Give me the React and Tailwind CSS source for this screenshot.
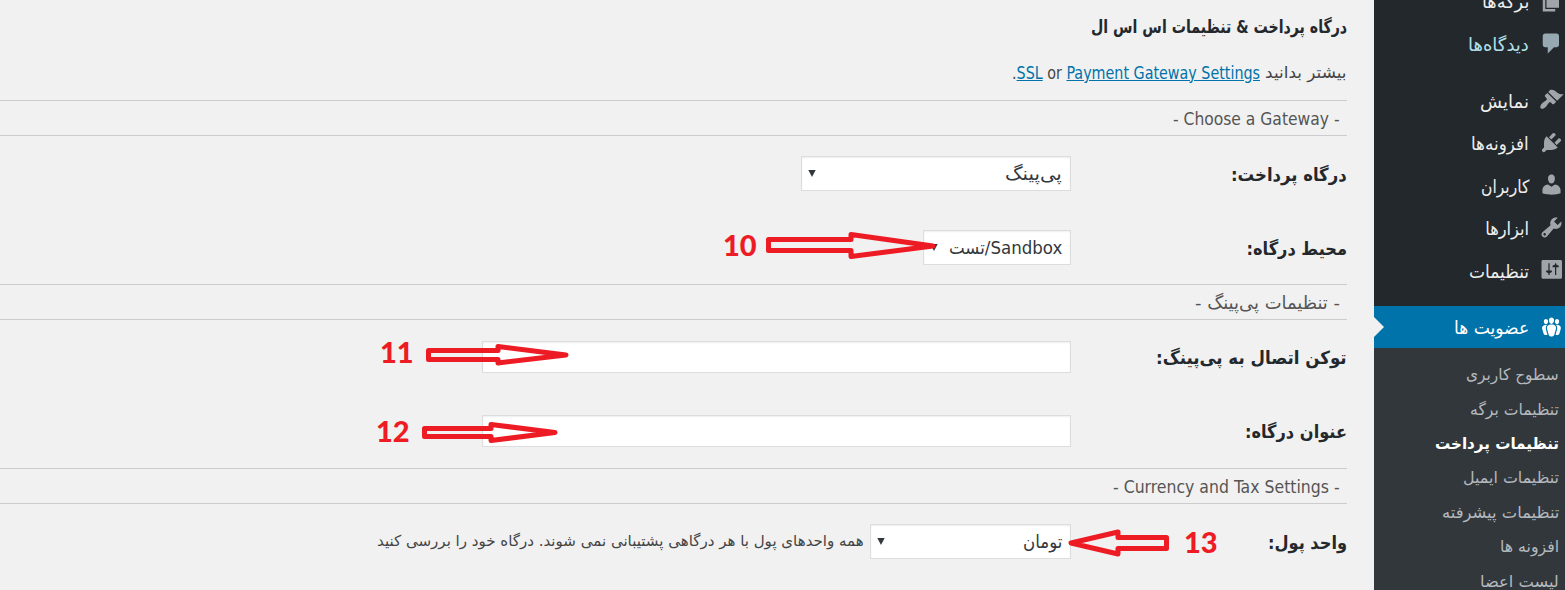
import { useLayoutEffect, useRef, useState } from "react";

const ICONS = {
  page: "M6 15V2h10v13H6zm-1 1h8v2H3V5h2v11z",
  comments: "M5 2h9c1.1 0 2 .9 2 2v7c0 1.1-.9 2-2 2h-2l-5 5v-5H5c-1.1 0-2-.9-2-2V4c0-1.1.9-2 2-2z",
  appearance:
    "M14.48 11.06L7.41 3.99l1.5-1.5c.5-.56 2.3-.47 3.51.32 1.21.8 1.43 1.28 2.91 2.1 1.18.64 2.45 1.26 4.45.85zm-.71.71L6.7 4.7 4.93 6.47c-.39.39-.39 1.02 0 1.41l1.06 1.06c.39.39.39 1.03 0 1.42-.6.6-1.43 1.11-2.21 1.69-.35.26-.7.53-1.01.84C1.43 14.23.4 16.08 1.4 17.07c.99 1 2.84-.03 4.18-1.36.31-.31.58-.66.85-1.02.57-.78 1.08-1.61 1.69-2.21.39-.39 1.02-.39 1.41 0l1.06 1.06c.39.39 1.02.39 1.41 0z",
  plugins:
    "M13.11 4.36L9.87 7.6 8 5.73l3.24-3.24c.35-.34 1.05-.2 1.56.32.52.51.66 1.21.31 1.55zm-8 1.77l.91-1.12 9.01 9.01-1.19.84c-.71.71-2.63 1.16-3.82 1.16H6.14L4.9 17.26c-.59.59-1.54.59-2.12 0-.59-.58-.59-1.53 0-2.12l1.24-1.24v-3.88c0-1.13.4-3.19 1.09-3.89zm7.26 3.97l3.24-3.24c.34-.35 1.04-.21 1.55.31.52.51.66 1.21.31 1.55l-3.24 3.25z",
  users:
    "M10 9.25c-2.27 0-2.73-3.44-2.73-3.44C7 4.02 7.82 2 9.97 2c2.16 0 2.98 2.02 2.71 3.81 0 0-.41 3.44-2.68 3.44zm0 2.57L12.72 10c2.39 0 4.52 2.33 4.52 4.53v2.49s-3.65 1.13-7.24 1.13c-3.65 0-7.24-1.13-7.24-1.13v-2.49c0-2.25 1.94-4.48 4.47-4.48z",
  tools:
    "M16.68 9.77c-1.34 1.34-3.3 1.67-4.95.99l-5.41 6.52c-.99.99-2.59.99-3.58 0s-.99-2.59 0-3.57l6.52-5.42c-.68-1.65-.35-3.61.99-4.95 1.28-1.28 3.12-1.62 4.72-1.06l-2.89 2.89 2.82 2.82 2.86-2.87c.53 1.58.18 3.39-1.08 4.65zM3.81 16.21c.4.39 1.04.39 1.43 0 .4-.4.4-1.04 0-1.43-.39-.4-1.03-.4-1.43 0-.39.39-.39 1.03 0 1.43z",
  settings:
    "M3.2 2.3h14c.7 0 1.2.5 1.2 1.200v12.700c0 .7-.5 1.200-1.200 1.200h-14c-.7 0-1.200-.5-1.200-1.200v-12.700c0-.7.5-1.200 1.200-1.200zM7.500 5v5.800H5.700v1.200l1.800.9v1.500h1v-1.500l1.800-.9v-1.200H8.500V5zM12.800 5v1l-2 .9v1.200h2v6.300h1V8.100h2V6.900l-2-.9V5z",
  groups:
    "M8.03 4.46c-.29 1.28.55 3.46 1.97 3.46 1.41 0 2.25-2.18 1.96-3.46-.22-.98-1.08-1.63-1.96-1.63-.89 0-1.74.65-1.97 1.63zm-4.13.9c-.25 1.08.47 2.93 1.67 2.93s1.92-1.85 1.67-2.93c-.19-.83-.92-1.39-1.67-1.39s-1.48.56-1.67 1.39zm8.86 0c-.25 1.08.47 2.93 1.66 2.93 1.2 0 1.92-1.85 1.67-2.93-.19-.83-.92-1.39-1.67-1.39-.74 0-1.47.56-1.66 1.39zm-.59 11.43l1.25-4.3C14.2 10 12.71 8.47 10 8.47c-2.72 0-4.21 1.53-3.44 4.02l1.26 4.3C8.05 17.51 9 18 10 18c.98 0 1.94-.49 2.17-1.21zm-6.1-7.63c-.49.67-.96 1.83-.42 3.59l1.12 3.79c-.34.2-.77.31-1.2.31-.85 0-1.65-.41-1.85-1.03l-1.07-3.65c-.65-2.11.61-3.4 2.92-3.4.27 0 .54.02.79.06-.1.1-.2.22-.29.33zm8.35-.39c2.31 0 3.58 1.29 2.92 3.4l-1.07 3.65c-.2.62-1 1.03-1.85 1.03-.43 0-.86-.11-1.2-.31l1.11-3.77c.55-1.78.08-2.94-.42-3.61-.08-.11-.18-.23-.28-.33.25-.04.51-.06.79-.06z",
};

// Sets a line of text to an exact width by condensing or widening it.
function Fit({ w, className = "", children }) {
  const ref = useRef(null);
  const [scale, setScale] = useState(1);
  useLayoutEffect(() => {
    setScale(w / ref.current.offsetWidth);
  }, [w]);
  return (
    <span className="block shrink-0" style={{ width: w }}>
      <span
        ref={ref}
        className={`block w-max origin-right whitespace-nowrap ${className}`}
        style={{ transform: `scaleX(${scale})` }}
      >
        {children}
      </span>
    </span>
  );
}

function MenuItem({
  icon,
  label,
  w,
  text = "text-[#eeeeee]",
  fill = "text-[#a0a5aa]",
  row = "h-[42.5px]",
  lift = "mb-[2px]",
}) {
  return (
    <li className={`flex shrink-0 items-center gap-[9.5px] pr-[1.5px] ${row}`}>
      <svg viewBox="0 0 20 20" className={`size-[25px] shrink-0 ${lift} ${fill}`} fill="currentColor" fillRule="evenodd">
        <path d={ICONS[icon]} />
      </svg>
      <Fit w={w} className={`pt-[2px] text-[18px] leading-[24px] ${text}`}>
        {label}
      </Fit>
    </li>
  );
}

const SUBMENU = [
  ["سطوح کاربری", 93],
  ["تنظیمات برگه", 89],
  ["تنظیمات پرداخت", 124, true],
  ["تنظیمات ایمیل", 96],
  ["تنظیمات پیشرفته", 117],
  ["افزونه ها", 59],
  ["لیست اعضا", 79],
];

function Sidebar() {
  return (
    <nav className="flex h-full w-[191px] shrink-0 flex-col overflow-hidden bg-[#23282d]">
      <ul className="-mt-5 flex shrink-0 flex-col">
        <MenuItem icon="page" label="برگه‌ها" w={47} lift="mb-0" />
        <MenuItem
          icon="comments"
          label="دیدگاه‌ها"
          w={61}
          text="text-[#b0e0ec]"
          fill="text-[#96a8b2]"
          lift="mb-0"
        />
        <li className="h-[14.5px]" />
        <MenuItem icon="appearance" label="نمایش" w={49} />
        <MenuItem icon="plugins" label="افزونه‌ها" w={58} />
        <MenuItem icon="users" label="کاربران" w={48} />
        <MenuItem icon="tools" label="ابزارها" w={44} />
        <MenuItem icon="settings" label="تنظیمات" w={60} />
        <li className="h-[14px]" />
        <MenuItem
          icon="groups"
          label="عضویت ها"
          w={75}
          text="text-white"
          fill="text-white"
          row="relative h-[42px] bg-[#0073aa] after:absolute after:left-0 after:top-[11px] after:border-y-[10px] after:border-l-[10px] after:border-y-transparent after:border-l-[#f1f1f1]"
        />
      </ul>
      <ul className="flex h-[260px] shrink-0 flex-col bg-[#32373c] pt-[10px] pr-[6px]">
        {SUBMENU.map(([label, w, current]) => (
          <li key={label} className="flex h-[34.4px] shrink-0 items-center">
            <Fit
              w={w}
              className={
                current
                  ? "text-[16px] leading-[22px] font-bold text-white"
                  : "text-[16px] leading-[22px] text-[#b4b9be]"
              }
            >
              {label}
            </Fit>
          </li>
        ))}
      </ul>
    </nav>
  );
}

function Band({ w, children }) {
  return (
    <div className="flex h-9 shrink-0 items-center border-y border-[#cccccc] pt-[2px] pr-[7px] text-[18px] leading-[24px] text-[#555555]">
      <Fit w={w}>{children}</Fit>
    </div>
  );
}

function Row({ label, w, height, children }) {
  return (
    <div className={`flex shrink-0 items-center ${height}`}>
      <div className="w-[276px] shrink-0 pt-[2px]">
        <Fit w={w} className="text-[18px] leading-[24px] font-bold text-[#23282d]">
          {label}
        </Fit>
      </div>
      {children}
    </div>
  );
}

function Select({ label, w, width }) {
  return (
    <div
      className={`flex h-[35px] shrink-0 items-center justify-between border border-[#dddddd] bg-white pr-[8px] pl-[6px] shadow-[inset_0_1px_2px_rgba(0,0,0,0.07)] ${width}`}
    >
      <Fit w={w} className="text-[18px] leading-[24px] text-[#32373c]">
        {label}
      </Fit>
      <svg viewBox="0 0 8 7" className="h-[7px] w-[8px] fill-[#32373c]">
        <path d="M0.3 0h7.4L4 7z" />
      </svg>
    </div>
  );
}

function TextBox() {
  return (
    <input
      className="h-[32px] w-[589px] border border-[#dddddd] bg-white px-2 shadow-[inset_0_1px_2px_rgba(0,0,0,0.07)] outline-none"
      type="text"
    />
  );
}

function Annotations() {
  const num = "absolute text-[29px] leading-[30px] font-black text-[#ed1c24] font-['Lato',sans-serif]";
  return (
    <div dir="ltr" className="pointer-events-none absolute inset-0">
      <svg
        viewBox="0 0 1565 590"
        className="absolute inset-0 h-[590px] w-[1565px]"
        fill="none"
        stroke="#ed1c24"
        strokeWidth="5"
        strokeLinejoin="round"
      >
        <path d="M768.5 239.5H851V234.500L933 246L851 256.500V250.500H768.500z" />
        <path d="M428.500 350.500H498V346.500L566 355L498 363V359.500H428.500z" />
        <path d="M424.500 428.500H491V424.500L555 432.500L491 440.500V436.500H424.500z" />
        <path d="M1166.500 537.500H1118V532L1071 543L1118 554V548.500H1166.500z" />
      </svg>
      <span className={`${num} left-[723px] top-[230px]`}>10</span>
      <span className={`${num} left-[380px] top-[337px]`}>11</span>
      <span className={`${num} left-[376px] top-[416px]`}>12</span>
      <span className={`${num} left-[1184px] top-[527px]`}>13</span>
    </div>
  );
}

export default function App() {
  return (
    <div
      dir="rtl"
      className="relative flex h-[590px] w-[1565px] overflow-hidden bg-[#f1f1f1] font-['DejaVu_Sans_Condensed','DejaVu_Sans',sans-serif]"
    >
      <Sidebar />
      <main className="flex min-w-0 flex-1 flex-col pr-[27px]">
        <h2 className="flex h-[53px] shrink-0 items-center text-[18px] leading-[24px] font-bold text-[#23282d]">
          <Fit w={256}>درگاه پرداخت &amp; تنظیمات اس اس ال</Fit>
        </h2>
        <div className="flex h-[47px] shrink-0 items-center gap-[5px] pb-2 text-[16px] leading-[22px] text-[#444444]">
          <Fit w={82}>بیشتر بدانید</Fit>
          <Fit w={248} className="text-[17px]">
            <a className="text-[#0073aa] underline">SSL</a> or{" "}
            <a className="text-[#0073aa] underline">Payment Gateway Settings</a>.
          </Fit>
        </div>
        <Band w={167}>- Choose a Gateway -</Band>
        <Row label="درگاه پرداخت:" w={116} height="h-[75px]">
          <Select label="پی‌پینگ" w={57} width="w-[270px]" />
        </Row>
        <Row label="محیط درگاه:" w={100} height="h-[73px]">
          <Select label="Sandbox/تست" w={113} width="w-[148px]" />
        </Row>
        <Band w={145}>- تنظیمات پی‌پینگ -</Band>
        <Row label="توکن اتصال به پی‌پینگ:" w={191} height="h-[74px]">
          <TextBox />
        </Row>
        <Row label="عنوان درگاه:" w={102} height="h-[74px]">
          <TextBox />
        </Row>
        <Band w={227}>- Currency and Tax Settings -</Band>
        <Row label="واحد پول:" w={79} height="h-[75px]">
          <Select label="تومان" w={39} width="w-[201px]" />
          <div className="mr-[6px] pb-[2px]">
            <Fit w={487} className="text-[15px] leading-[22px] text-[#444444]">
              همه واحدهای پول با هر درگاهی پشتیبانی نمی شوند. درگاه خود را بررسی کنید
            </Fit>
          </div>
        </Row>
      </main>
      <Annotations />
    </div>
  );
}
